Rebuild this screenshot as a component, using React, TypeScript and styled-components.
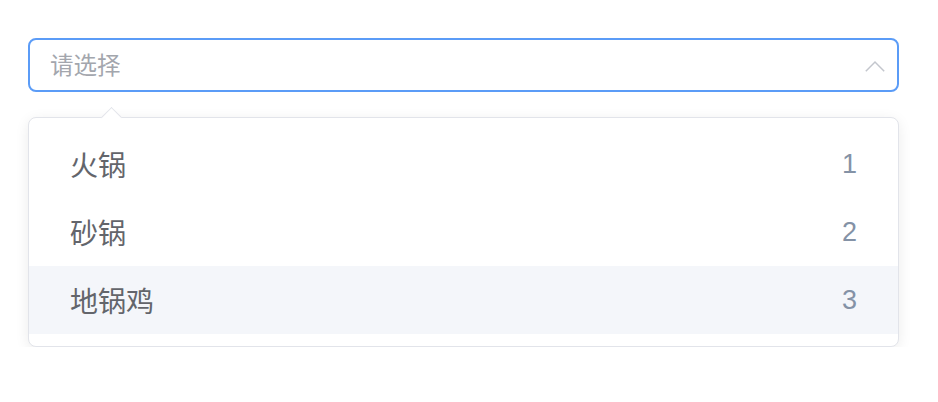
import React from "react";
import styled, { createGlobalStyle } from "styled-components";

const Global = createGlobalStyle`
  html, body { margin: 0; padding: 0; background: #ffffff; }
  body { font-family: "Liberation Sans", "Noto Sans CJK SC", sans-serif; }
`;

const Page = styled.div`
  padding: 38px 39px 0 28px;
  width: 938px;
  box-sizing: border-box;
`;

const SelectBox = styled.div`
  position: relative;
  width: 871px;
`;

const Input = styled.div`
  height: 54px;
  box-sizing: border-box;
  border: 2px solid #5b9cf7;
  border-radius: 8px;
  display: flex;
  align-items: center;
  justify-content: space-between;
  padding: 0 12px 0 20px;
`;

const Placeholder = styled.span`
  font-family: "Noto Sans CJK SC", sans-serif;
  font-size: 23.5px;
  color: #a3a6ad;
  line-height: 1;
`;

const Chevron = styled.svg`
  width: 20px;
  height: 12px;
  display: block;
  margin-top: 1px;
`;

const Dropdown = styled.div`
  position: relative;
  margin-top: 25px;
  border: 1px solid #e2e4ea;
  border-radius: 8px;
  background: #fff;
  box-shadow: 0 3px 14px rgba(0, 0, 0, 0.08);
  padding: 12px 0;
`;

const Arrow = styled.div`
  position: absolute;
  top: -8px;
  left: 75px;
  width: 14px;
  height: 14px;
  background: #fff;
  border-top: 1px solid #e2e4ea;
  border-left: 1px solid #e2e4ea;
  transform: rotate(45deg);
`;

const List = styled.ul`
  list-style: none;
  margin: 0;
  padding: 0;
`;

const Item = styled.li<{ $hover?: boolean }>`
  height: 68px;
  display: flex;
  align-items: center;
  justify-content: space-between;
  padding: 0 41px 0 41px;
  background: ${(p) => (p.$hover ? "#f4f6fa" : "transparent")};
`;

const Label = styled.span`
  font-family: "Noto Sans CJK SC", sans-serif;
  font-size: 28px;
  color: #63656b;
  line-height: 1;
`;

const Value = styled.span`
  font-family: "Liberation Sans", "Helvetica Neue", sans-serif;
  font-size: 27px;
  color: #8492a6;
  line-height: 1;
`;

const options = [
  { label: "火锅", value: "1" },
  { label: "砂锅", value: "2" },
  { label: "地锅鸡", value: "3", hover: true },
];

export default function App() {
  return (
    <>
      <Global />
      <Page>
        <SelectBox>
          <Input>
            <Placeholder>请选择</Placeholder>
            <Chevron viewBox="0 0 20 12" fill="none">
              <path d="M0.8 11.3 L10 2 L19.2 11.3" stroke="#c3c6cd" strokeWidth="1.5" />
            </Chevron>
          </Input>
          <Dropdown>
            <Arrow />
            <List>
              {options.map((o) => (
                <Item key={o.value} $hover={o.hover}>
                  <Label>{o.label}</Label>
                  <Value>{o.value}</Value>
                </Item>
              ))}
            </List>
          </Dropdown>
        </SelectBox>
      </Page>
    </>
  );
}
